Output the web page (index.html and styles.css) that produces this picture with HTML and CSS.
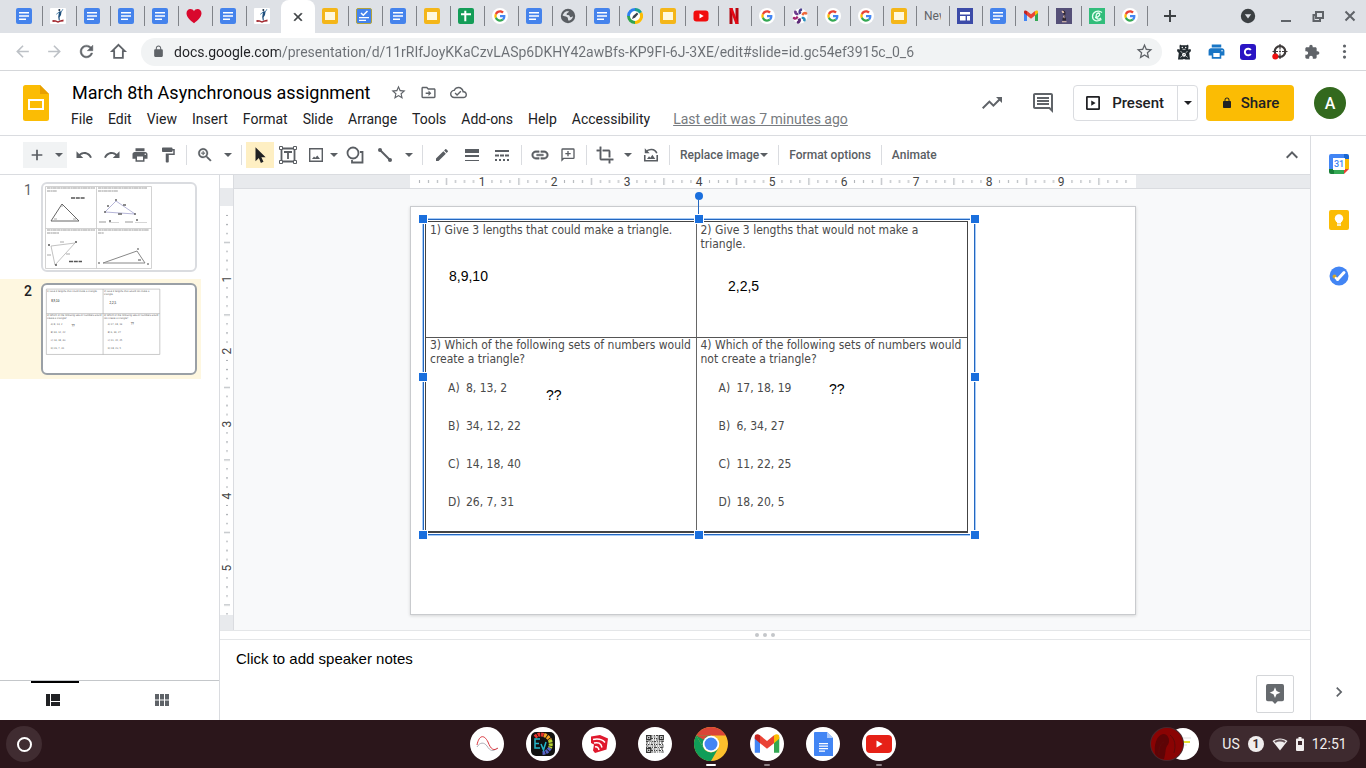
FILE: index.html
```html
<!DOCTYPE html>
<html lang="en">
  <head>
    <meta charset="utf-8">
    <title>March 8th Asynchronous assignment</title>
    <link rel="stylesheet" href="styles.css">
  </head>
  <body>
    <svg class="sprite" aria-hidden="true">
      <!-- favicons -->
      <symbol id="f-doc" viewBox="0 0 16 16"><rect width="16" height="16" rx="2" fill="#4583ec"/><path d="M3 4h10v1.600H3zM3 7.200h10v1.600H3zM3 10.400h7V12H3z" fill="#fff"/></symbol>
      <symbol id="f-slide" viewBox="0 0 16 16"><rect width="16" height="16" rx="2" fill="#f4b619"/><rect x="3" y="4" width="10" height="8" fill="#fff8dd"/></symbol>
      <symbol id="f-check" viewBox="0 0 16 16"><rect x=".5" y=".5" width="15" height="15" rx="1.500" fill="#4583ec" stroke="#b3a33c"/><path d="M5 5l2.300 2.300L11.500 3" fill="none" stroke="#fff" stroke-width="1.500"/><path d="M3 9h10v1.300H3zM3 11.700h7V13H3z" fill="#fff"/></symbol>
      <symbol id="f-sheet" viewBox="0 0 16 16"><rect width="16" height="16" rx="2" fill="#149d58"/><path d="M3 5.200h10v2H3zM6.300 2.800h2v10.400h-2z" fill="#fff"/></symbol>
      <symbol id="f-runner" viewBox="0 0 16 16"><rect width="16" height="16" rx="1" fill="#fff"/><path d="M9 3.600l2.600-.3-.6 3.600-1.400 2.300.2 3.300h-1l-.6-3.600.4-2.300z" fill="#1f4f7c"/><path d="M11.300 3.800l1.600-2.600M9.200 4L6.300 6.300" stroke="#2e6b9a" stroke-width=".8"/><circle cx="9.300" cy="2" r="1" fill="#1f2f44"/><path d="M2.500 12l3 .3 2.500 1 2.500-1 3-.8v2l-3 .3-2.500 1-2.500-1-3 .2z" fill="#a3282f"/></symbol>
      <symbol id="f-heart" viewBox="0 0 16 16"><path d="M8 15.300C4 12 .5 8.800.5 5.200.5 2.700 2.300 1 4.400 1 6 1 7.400 1.900 8 3.200 8.600 1.900 10 1 11.600 1c2.100 0 3.900 1.700 3.900 4.200C15.500 8.800 12 12 8 15.300z" fill="#d9082d"/></symbol>
      <symbol id="f-g" viewBox="-10 -10 68 68"><circle cx="24" cy="24" r="34" fill="#fff"/><path fill="#EA4335" d="M24 9.500c3.540 0 6.710 1.220 9.210 3.600l6.850-6.850C35.900 2.380 30.470 0 24 0 14.620 0 6.510 5.380 2.560 13.220l7.980 6.190C12.430 13.720 17.740 9.500 24 9.500z"/><path fill="#4285F4" d="M46.980 24.550c0-1.570-.15-3.090-.38-4.550H24v9.020h12.940c-.58 2.960-2.260 5.480-4.780 7.180l7.730 6c4.510-4.180 7.090-10.360 7.090-17.650z"/><path fill="#FBBC05" d="M10.530 28.590c-.48-1.450-.76-2.990-.76-4.590s.27-3.140.76-4.590l-7.980-6.190C.92 16.460 0 20.120 0 24c0 3.880.92 7.540 2.560 10.780l7.970-6.190z"/><path fill="#34A853" d="M24 48c6.480 0 11.930-2.130 15.890-5.810l-7.730-6c-2.150 1.450-4.920 2.300-8.160 2.300-6.260 0-11.570-4.220-13.470-9.910l-7.980 6.190C6.510 42.620 14.620 48 24 48z"/></symbol>
      <symbol id="f-globe" viewBox="0 0 16 16"><circle cx="8" cy="8" r="7.200" fill="#5a5e63"/><path d="M4 5c1-1.800 3.500-2 5-1.500-.5 1.300-2 1.200-2.500 2.500-.3 1 1.500 1 2.500 1.200 1 .3.500 1.800 1.800 2 .8.100 1.200-.7 2.200-.7-.6 2.500-2.500 4-4.300 4.200C7.500 11.500 8.500 10 7 9 5.500 8 4 8.500 2.500 7.200z" fill="#dee1e6"/></symbol>
      <symbol id="f-pen" viewBox="0 0 16 16"><circle cx="8" cy="8" r="8" fill="#fff"/><path d="M8 0a8 8 0 0 0-8 8h3a5 5 0 0 1 5-5z" fill="#2d7ff0"/><path d="M0 8a8 8 0 0 0 8 8v-3a5 5 0 0 1-5-5z" fill="#32a350"/><path d="M8 16a8 8 0 0 0 7-12l-2.600 1.600A5 5 0 0 1 8 13z" fill="#fbbc05"/><path d="M8 0a8 8 0 0 1 7 4l-2.600 1.600A5 5 0 0 0 8 3z" fill="#1ba08d"/><path d="M5 11l1-3 4-3.500L11.300 6 8 9.800z" fill="#39424e"/></symbol>
      <symbol id="f-youtube" viewBox="0 0 16 16"><rect x=".5" y="2.500" width="15" height="11" rx="3" fill="#f10d0d"/><path d="M6.500 5.500v5l4.200-2.500z" fill="#fff"/></symbol>
      <symbol id="f-netflix" viewBox="0 0 16 16"><path d="M3.500 0h3v16h-3zM9.500 0h3v16h-3z" fill="#b1060f"/><path d="M3.500 0h3l6 16h-3z" fill="#e50914"/></symbol>
      <symbol id="f-photos" viewBox="0 0 16 16"><circle cx="8" cy="8" r="7.500" fill="#fff"/><path d="M7.500 6.500C5.500 4.500 6.500 1 9 .2c2 .8 1.500 3-.5 3.300 1.500.8 1 2.200-1 3z" fill="#4c3f8f"/><path d="M9.500 6.800c.5-3 4-4 5.800-2 .4 2-1.700 2.700-2.800 1.200 0 1.500-1.200 2-3 .8z" fill="#ee6a3c"/><path d="M9.800 8.800c3-.5 4.700 2 3.700 4.500-1.700 1-3-.6-2.300-2.200-1.400.6-2-.6-1.400-2.300z" fill="#2a8fbd"/><path d="M8.300 10c1.600 2.200.3 5.200-2.300 5.700-2-.6-1.600-2.700.2-3-1.400-.8.200-2.500 2.100-2.700z" fill="#5d2a78"/><path d="M6.500 9.200C5.500 12 2.200 12.500.7 10.400c0-2 2-2.300 3-.9.100-1.400 1.700-1.700 2.800-.3z" fill="#a3246f"/><path d="M6.300 7.300C3.500 7.800 1.300 5.200 2.300 2.700c1.800-1 3.200.7 2.500 2.300 1.300-.6 2.200.8 1.500 2.300z" fill="#6b3b8c"/></symbol>
      <symbol id="f-sites" viewBox="0 0 16 16"><rect width="16" height="16" fill="#3c4ba8"/><path d="M3 4h10v2.600H3zM3 8h5.600v4.500H3zM10 8h3v4.500h-3z" fill="#fff"/></symbol>
      <symbol id="f-gmail" viewBox="0 0 16 16"><path d="M1 4v9h3V6.500z" fill="#4285f4"/><path d="M12 6.500V13h3V4z" fill="#34a853"/><path d="M4 3l4 3.300L12 3v4.500l-4 3.200-4-3.200z" fill="#ea4335"/><path d="M1 5V3.800C1 2.500 2.500 2 4 3v4.500z" fill="#c5221f"/><path d="M15 5V3.800C15 2.500 13.500 2 12 3v4.500z" fill="#fbbc04"/></symbol>
      <symbol id="f-chess" viewBox="0 0 16 16"><rect width="16" height="16" fill="#555078"/><path d="M6.500 3c1.500-1 3 0 3 2L9 9l1 1.500v2H6.500v-2L8 8 7.500 6z" fill="#2d2430"/><path d="M5.500 3c1.200-.8 2.600 0 2.800 2L6.500 5zM7 9l1.300-2.500.3 4zM6 13.300h4.500v1H6z" fill="#e8c7b4"/></symbol>
      <symbol id="f-c" viewBox="0 0 16 16"><rect width="16" height="16" fill="#32bd7b"/><path d="M13 4.500C9 1.500 3.500 4 3.500 8.500c0 4.500 5 5.500 9 3M6 9.500c4.500.3 6-4.300 3.500-4.500-2.300 0-3.500 4.500-1 5.800 1 .5 2.500.2 3.500-.8" fill="none" stroke="#e3fff0" stroke-width="1.300"/></symbol>

      <!-- browser -->
      <symbol id="i-close" viewBox="0 0 24 24"><path d="M19 6.410L17.590 5 12 10.590 6.410 5 5 6.410 10.590 12 5 17.590 6.410 19 12 13.410 17.590 19 19 17.590 13.410 12z" stroke="currentColor"/></symbol>
      <symbol id="i-add" viewBox="0 0 24 24"><path d="M20 13.300h-6.700V20h-2.600v-6.700H4v-2.600h6.700V4h2.600v6.700H20z"/></symbol>
      <symbol id="i-back" viewBox="0 0 24 24"><path d="M20 11H7.830l5.590-5.590L12 4l-8 8 8 8 1.410-1.410L7.830 13H20v-2z"/></symbol>
      <symbol id="i-forward" viewBox="0 0 24 24"><path d="M12 4l-1.410 1.410L16.170 11H4v2h12.170l-5.580 5.590L12 20l8-8z"/></symbol>
      <symbol id="i-reload" viewBox="0 0 24 24"><path d="M17.650 6.350C16.200 4.900 14.210 4 12 4c-4.420 0-7.990 3.580-7.990 8s3.570 8 7.990 8c3.730 0 6.840-2.550 7.730-6h-2.080c-.82 2.330-3.040 4-5.650 4-3.310 0-6-2.690-6-6s2.690-6 6-6c1.660 0 3.140.69 4.220 1.780L13 11h7V4l-2.350 2.350z" stroke="currentColor" stroke-width=".6"/></symbol>
      <symbol id="i-home" viewBox="0 0 24 24"><path d="M12 3.500l8 8h-2.500V20h-11v-8.500H4z" fill="none" stroke="currentColor" stroke-width="2.300"/></symbol>
      <symbol id="i-lock" viewBox="0 0 24 24"><path d="M18 8h-1V6c0-2.760-2.240-5-5-5S7 3.240 7 6v2H6c-1.100 0-2 .9-2 2v10c0 1.100.9 2 2 2h12c1.100 0 2-.9 2-2V10c0-1.100-.9-2-2-2zM8.900 8V6c0-1.710 1.390-3.100 3.100-3.100s3.100 1.390 3.100 3.100v2z"/></symbol>
      <symbol id="i-star" viewBox="0 0 24 24"><path d="M22 9.240l-7.190-.62L12 2 9.190 8.630 2 9.240l5.460 4.730L5.820 21 12 17.270 18.180 21l-1.630-7.030L22 9.240zM12 15.400l-3.760 2.270 1-4.280-3.320-2.880 4.380-.38L12 6.100l1.710 4.040 4.380.38-3.320 2.880 1 4.280L12 15.400z"/></symbol>
      <symbol id="i-more" viewBox="0 0 24 24"><circle cx="12" cy="5" r="2"/><circle cx="12" cy="12" r="2"/><circle cx="12" cy="19" r="2"/></symbol>
      <symbol id="i-puzzle" viewBox="0 0 24 24"><path d="M20.500 11H19V7c0-1.100-.9-2-2-2h-4V3.500C13 2.120 11.880 1 10.500 1S8 2.120 8 3.500V5H4c-1.100 0-1.990.9-1.990 2v3.800H3.500c1.490 0 2.700 1.210 2.700 2.700s-1.210 2.700-2.700 2.700H2V20c0 1.100.9 2 2 2h3.800v-1.500c0-1.490 1.210-2.700 2.700-2.700 1.490 0 2.700 1.210 2.700 2.700V22H17c1.100 0 2-.9 2-2v-4h1.500c1.380 0 2.500-1.120 2.500-2.500S21.880 11 20.500 11z"/></symbol>
      <symbol id="i-bear" viewBox="0 0 16 16"><path d="M4 .5l1.300.7h5.400L12 .5l.5 1.500-.3 3.500L14.500 5l.5 2-1.800 2 .8 6.500H9.500L8 15l-1.500.500H2L2.800 9 1 7l.5-2 2.300.5L3.500 2z" fill="#232b30"/><circle cx="6.300" cy="3.500" r=".7" fill="#fff"/><circle cx="9.700" cy="3.500" r=".7" fill="#fff"/><path d="M6.500 5.300h3M4.500 7.500l1.800 1M11.500 7.500l-1.800 1M4.500 13.500l1.300-1.500M11.500 13.500L10.200 12" stroke="#fff" stroke-width=".7"/><circle cx="8" cy="10.700" r="2" fill="#fff"/><path d="M7.400 11.300l1.300-1.500" stroke="#333" stroke-width=".7"/></symbol>
      <symbol id="i-print" viewBox="0 0 24 24"><path d="M19 8H5c-1.660 0-3 1.340-3 3v6h4v4h12v-4h4v-6c0-1.660-1.340-3-3-3zm-3 11H8v-5h8v5zm3-7c-.55 0-1-.45-1-1s.45-1 1-1 1 .45 1 1-.45 1-1 1zm-1-9H6v4h12V3z"/></symbol>
      <symbol id="i-c" viewBox="0 0 16 16"><rect width="16" height="16" rx="3" fill="#2a15c4"/><path d="M10.800 6A3.300 3.300 0 1 0 10.800 10" fill="none" stroke="#fff" stroke-width="2"/></symbol>
      <symbol id="i-target" viewBox="0 0 16 16"><circle cx="8" cy="7.500" r="5.300" fill="#fff" stroke="#3e3a3a" stroke-width="2.200"/><path d="M8 0v5.500M8 9.500V15M.5 7.500H6M10 7.500h5.500" stroke="#3e3a3a" stroke-width="1.200"/><circle cx="8" cy="7.500" r="1" fill="#3e3a3a"/><circle cx="3.300" cy="12.500" r="3" fill="#ee1111"/></symbol>

      <!-- document header -->
      <symbol id="i-slides" viewBox="0 0 26 36"><path d="M2.500 0H17l9 9v24.500a2.500 2.500 0 0 1-2.500 2.500h-21A2.500 2.500 0 0 1 0 33.500v-31A2.500 2.500 0 0 1 2.500 0z" fill="#fbbc04"/><path d="M17 0l9 9h-9z" fill="#e8a002"/><rect x="6" y="15" width="14" height="9" fill="none" stroke="#fff" stroke-width="2"/></symbol>
      <symbol id="i-move" viewBox="0 0 24 24"><path d="M20 6h-8l-2-2H4c-1.100 0-2 .9-2 2v12c0 1.100.9 2 2 2h16c1.100 0 2-.9 2-2V8c0-1.100-.9-2-2-2zm0 12H4V6h5.200l2 2H20v10zm-8-1l4-4-4-4v3H8v2h4z"/></symbol>
      <symbol id="i-cloud" viewBox="0 0 24 24"><path d="M19.350 10.040C18.670 6.590 15.640 4 12 4 9.110 4 6.600 5.640 5.350 8.040 2.340 8.360 0 10.910 0 14c0 3.310 2.690 6 6 6h13c2.760 0 5-2.240 5-5 0-2.640-2.050-4.780-4.650-4.960zM19 18H6c-2.210 0-4-1.790-4-4 0-2.050 1.530-3.760 3.560-3.970l1.070-.11.500-.95C8.080 7.140 9.940 6 12 6c2.620 0 4.880 1.860 5.390 4.430l.3 1.500 1.530.11c1.560.1 2.780 1.410 2.780 2.960 0 1.650-1.350 3-3 3zm-9-3.820l-2.090-2.090L6.500 13.500 10 17l6.010-6.010-1.410-1.410z"/></symbol>
      <symbol id="i-trend" viewBox="0 0 24 24"><path d="M16 6l2.290 2.290-4.880 4.880-4-4L2 16.590 3.410 18l6-6 4 4 6.300-6.290L22 12V6z"/></symbol>
      <symbol id="i-comment" viewBox="0 0 24 24"><path d="M21.990 4c0-1.100-.89-2-1.990-2H4c-1.100 0-2 .9-2 2v12c0 1.100.9 2 2 2h14l4 4-.01-18zM20 4v13.170L18.830 16H4V4h16zM6 12h12v2H6zm0-3h12v2H6zm0-3h12v2H6z"/></symbol>
      <symbol id="i-present" viewBox="0 0 16 16"><rect x="1" y="1" width="14" height="14" rx=".5" fill="none" stroke="currentColor" stroke-width="2"/><path d="M6 5v6l5-3z"/></symbol>
      <symbol id="i-caret" viewBox="0 0 8 4"><path d="M0 0h8L4 4z"/></symbol>

      <!-- editing toolbar -->
      <symbol id="i-undo" viewBox="0 0 24 24"><path d="M12.500 8c-2.650 0-5.050.99-6.900 2.600L2 7v9h9l-3.620-3.620c1.390-1.160 3.160-1.880 5.120-1.880 3.540 0 6.550 2.310 7.600 5.500l2.370-.78C21.080 11.030 17.150 8 12.500 8z"/></symbol>
      <symbol id="i-redo" viewBox="0 0 24 24"><path d="M18.400 10.600C16.550 8.990 14.150 8 11.500 8c-4.650 0-8.580 3.030-9.960 7.220L3.900 16c1.050-3.190 4.050-5.500 7.600-5.500 1.950 0 3.730.72 5.120 1.880L13 16h9V7l-3.600 3.600z"/></symbol>
      <symbol id="i-paint" viewBox="0 0 24 24"><path d="M18 4V3c0-.55-.45-1-1-1H5c-.55 0-1 .45-1 1v4c0 .55.45 1 1 1h12c.55 0 1-.45 1-1V6h1v4H9v11c0 .55.45 1 1 1h2c.55 0 1-.45 1-1v-9h8V4h-3z"/></symbol>
      <symbol id="i-zoom" viewBox="0 0 24 24"><path d="M15.500 14h-.79l-.28-.27C15.410 12.590 16 11.110 16 9.500 16 5.910 13.090 3 9.500 3S3 5.910 3 9.500 5.910 16 9.500 16c1.610 0 3.090-.59 4.230-1.570l.27.28v.79l5 4.990L20.490 19l-4.990-5zm-6 0C7.010 14 5 11.990 5 9.500S7.010 5 9.500 5 14 7.010 14 9.500 11.990 14 9.500 14zM12 10h-2v2H9v-2H7V9h2V7h1v2h2z" stroke="currentColor" stroke-width=".4"/></symbol>
      <symbol id="i-cursor" viewBox="0 0 16 16"><path d="M4 1v12.500l3-2.800 1.800 4.300 2.300-1-1.900-4H13z" fill="#202124"/></symbol>
      <symbol id="i-textbox" viewBox="0 0 18 18"><path d="M2.500 2.500h13v13h-13zM5 6h8M9 6v7" fill="none" stroke="currentColor" stroke-width="1.800"/><g fill="#fff" stroke="currentColor"><path d="M.5.5h3v3h-3zM14.500.5h3v3h-3zM.5 14.500h3v3h-3zM14.500 14.500h3v3h-3z"/></g></symbol>
      <symbol id="i-image" viewBox="0 0 14 14"><path d="M.700.700h12.600v12.600H.700z" fill="none" stroke="currentColor" stroke-width="1.400"/><path d="M3 11l2-2.500 1.300 1.300L8.300 7.500 11 11z"/></symbol>
      <symbol id="i-shape" viewBox="0 0 18 18"><circle cx="7" cy="7" r="5.500" fill="none" stroke="currentColor" stroke-width="1.800"/><path d="M14 6h2.500v10.500H6V14" fill="none" stroke="currentColor" stroke-width="1.800"/></symbol>
      <symbol id="i-line" viewBox="0 0 16 16"><path d="M3 3l10 10" stroke="currentColor" stroke-width="2"/><circle cx="3" cy="3" r="2"/><circle cx="13" cy="13" r="2"/></symbol>
      <symbol id="i-edit" viewBox="0 0 24 24"><path d="M3 17.250V21h3.750L17.810 9.940l-3.750-3.750L3 17.250zM20.710 7.040c.39-.39.39-1.020 0-1.410l-2.340-2.340c-.39-.39-1.020-.39-1.410 0l-1.830 1.830 3.750 3.750 1.830-1.830z"/></symbol>
      <symbol id="i-weight" viewBox="0 0 14 14"><path d="M0 1h14v4H0zM0 7h14v2H0zM0 12h14v1H0z"/></symbol>
      <symbol id="i-dash" viewBox="0 0 14 14"><path d="M0 2h14v2H0zM0 6.500h4v2H0zM5 6.500h4v2H5zM10 6.500h4v2h-4zM0 11h2v2H0zM4 11h2v2H4zM8 11h2v2H8zM12 11h2v2h-2z"/></symbol>
      <symbol id="i-link" viewBox="0 0 24 24"><path d="M3.900 12c0-1.710 1.390-3.100 3.100-3.100h4V7H7c-2.760 0-5 2.240-5 5s2.240 5 5 5h4v-1.900H7c-1.710 0-3.100-1.390-3.100-3.100zM8 13h8v-2H8v2zm9-6h-4v1.900h4c1.710 0 3.100 1.390 3.100 3.100s-1.390 3.100-3.100 3.100h-4V17h4c2.760 0 5-2.240 5-5s-2.240-5-5-5z" stroke="currentColor" stroke-width=".5"/></symbol>
      <symbol id="i-addcomment" viewBox="0 0 24 24"><path d="M20 2H4a2 2 0 0 0-2 2v18l4-4h14a2 2 0 0 0 2-2V4a2 2 0 0 0-2-2zm0 14H5l-1 1V4h16zM11 14h2v-3h3V9h-3V6h-2v3H8v2h3z"/></symbol>
      <symbol id="i-crop" viewBox="0 0 24 24"><path d="M17 15h2V7c0-1.100-.9-2-2-2H9v2h8v8zM7 17V1H5v4H1v2h4v10c0 1.100.9 2 2 2h10v4h2v-4h4v-2H7z" stroke="currentColor" stroke-width=".5"/></symbol>
      <symbol id="i-reset" viewBox="0 0 18 18"><path d="M2 9v6.500h14V9M3.500 5.500C6 1.800 13.500 1.500 15.500 7" fill="none" stroke="currentColor" stroke-width="1.800"/><path d="M2 1.500V7h5.500zM4.500 13.500l2.300-3L8.300 12l2.200-3.300 3.300 4.800z"/></symbol>
      <symbol id="i-up" viewBox="0 0 24 24"><path d="M12 8l-6 6 1.410 1.410L12 10.830l4.590 4.580L18 14z"/></symbol>
      <symbol id="i-right" viewBox="0 0 24 24"><path d="M10 6L8.590 7.410 13.170 12l-4.580 4.590L10 18l6-6z"/></symbol>
      <symbol id="i-film" viewBox="0 0 14 12"><path d="M0 0h4v12H0zM5 0h9v7H5zM5 8h9v4H5z"/></symbol>
      <symbol id="i-grid" viewBox="0 0 14 12"><path d="M0 0h4v5.500H0zM5 0h4v5.500H5zM10 0h4v5.500h-4zM0 6.500h4V12H0zM5 6.500h4V12H5zM10 6.500h4V12h-4z"/></symbol>
      <symbol id="i-explore" viewBox="0 0 20 22"><path d="M2 0h16a2 2 0 0 1 2 2v15a2 2 0 0 1-2 2h-5l-3 3-3-3H2a2 2 0 0 1-2-2V2a2 2 0 0 1 2-2z"/><path d="M10 3.500l1.700 4.300L16 9.500l-4.300 1.700L10 15.500l-1.700-4.300L4 9.500l4.300-1.700z" fill="#fff"/></symbol>
    </svg>

    <nav class="tabs" aria-label="Tabs">
      <a class="tab" href="#"><svg><use href="#f-doc"/></svg></a>
      <a class="tab" href="#"><svg><use href="#f-runner"/></svg></a>
      <a class="tab" href="#"><svg><use href="#f-doc"/></svg></a>
      <a class="tab" href="#"><svg><use href="#f-doc"/></svg></a>
      <a class="tab" href="#"><svg><use href="#f-doc"/></svg></a>
      <a class="tab" href="#"><svg><use href="#f-heart"/></svg></a>
      <a class="tab" href="#"><svg><use href="#f-doc"/></svg></a>
      <a class="tab last" href="#"><svg><use href="#f-runner"/></svg></a>
      <div class="tab active"><button aria-label="Close tab"><svg><use href="#i-close"/></svg></button></div>
      <a class="tab" href="#"><svg><use href="#f-slide"/></svg></a>
      <a class="tab" href="#"><svg><use href="#f-check"/></svg></a>
      <a class="tab" href="#"><svg><use href="#f-doc"/></svg></a>
      <a class="tab" href="#"><svg><use href="#f-slide"/></svg></a>
      <a class="tab" href="#"><svg><use href="#f-sheet"/></svg></a>
      <a class="tab" href="#"><svg><use href="#f-g"/></svg></a>
      <a class="tab" href="#"><svg><use href="#f-doc"/></svg></a>
      <a class="tab" href="#"><svg><use href="#f-globe"/></svg></a>
      <a class="tab small" href="#"><svg><use href="#f-doc"/></svg></a>
      <a class="tab small" href="#"><svg><use href="#f-pen"/></svg></a>
      <a class="tab small" href="#"><svg><use href="#f-slide"/></svg></a>
      <a class="tab small" href="#"><svg><use href="#f-youtube"/></svg></a>
      <a class="tab small" href="#"><svg><use href="#f-netflix"/></svg></a>
      <a class="tab small" href="#"><svg><use href="#f-g"/></svg></a>
      <a class="tab small" href="#"><svg><use href="#f-photos"/></svg></a>
      <a class="tab small" href="#"><svg><use href="#f-g"/></svg></a>
      <a class="tab small" href="#"><svg><use href="#f-g"/></svg></a>
      <a class="tab small" href="#"><svg><use href="#f-slide"/></svg></a>
      <a class="tab small" href="#"><span>New</span></a>
      <a class="tab small" href="#"><svg><use href="#f-sites"/></svg></a>
      <a class="tab small" href="#"><svg><use href="#f-doc"/></svg></a>
      <a class="tab small" href="#"><svg><use href="#f-gmail"/></svg></a>
      <a class="tab small" href="#"><svg><use href="#f-chess"/></svg></a>
      <a class="tab small" href="#"><svg><use href="#f-c"/></svg></a>
      <a class="tab small" href="#"><svg><use href="#f-g"/></svg></a>
      <button class="newtab" aria-label="New tab"><svg><use href="#i-add"/></svg></button>
      <div class="window">
        <button class="search" aria-label="Search tabs"><svg viewBox="0 0 16 16"><circle cx="8" cy="8" r="7.200"/><path d="M4.800 6.200h6.400L8 10.500z" fill="#dee1e6"/></svg></button>
        <button aria-label="Minimize"><svg viewBox="0 0 16 16"><path d="M3 12h10v2H3z"/></svg></button>
        <button aria-label="Restore"><svg viewBox="0 0 16 16"><path d="M6 4h7v6H6zM5.500 7H3.500v6H10V10.500" fill="none" stroke="currentColor" stroke-width="2"/></svg></button>
        <button aria-label="Close"><svg viewBox="0 0 16 16"><path d="M3.500 3.500l9 9M12.500 3.500l-9 9" stroke="currentColor" stroke-width="2"/></svg></button>
      </div>
    </nav>

    <div class="browser">
      <button class="off" aria-label="Back"><svg><use href="#i-back"/></svg></button>
      <button class="off" aria-label="Forward"><svg><use href="#i-forward"/></svg></button>
      <button aria-label="Reload"><svg><use href="#i-reload"/></svg></button>
      <button aria-label="Home"><svg><use href="#i-home"/></svg></button>
      <div class="omnibox">
        <svg class="lock"><use href="#i-lock"/></svg>
        <input type="text" aria-label="Address" value="docs.google.com/presentation/d/11rRIfJoyKKaCzvLASp6DKHY42awBfs-KP9FI-6J-3XE/edit#slide=id.gc54ef3915c_0_6">
        <button aria-label="Bookmark"><svg><use href="#i-star"/></svg></button>
      </div>
      <button aria-label="Bear extension"><svg class="ext"><use href="#i-bear"/></svg></button>
      <button class="blue" aria-label="Print extension"><svg><use href="#i-print"/></svg></button>
      <button aria-label="C extension"><svg class="ext"><use href="#i-c"/></svg></button>
      <button aria-label="Target extension"><svg class="ext"><use href="#i-target"/></svg></button>
      <button aria-label="Extensions"><svg class="ext"><use href="#i-puzzle"/></svg></button>
      <button aria-label="More"><svg><use href="#i-more"/></svg></button>
    </div>

    <header class="dochead">
      <a class="logo" href="#" aria-label="Slides home"><svg><use href="#i-slides"/></svg></a>
      <div class="titles">
        <div class="titlerow">
          <h1>March 8th Asynchronous assignment</h1>
          <button aria-label="Star"><svg><use href="#i-star"/></svg></button>
          <button aria-label="Move"><svg><use href="#i-move"/></svg></button>
          <button aria-label="Saved to Drive"><svg><use href="#i-cloud"/></svg></button>
        </div>
        <div class="menus">
          <button>File</button>
          <button>Edit</button>
          <button>View</button>
          <button>Insert</button>
          <button>Format</button>
          <button>Slide</button>
          <button>Arrange</button>
          <button>Tools</button>
          <button>Add-ons</button>
          <button>Help</button>
          <button>Accessibility</button>
          <a href="#">Last edit was 7 minutes ago</a>
        </div>
      </div>
      <div class="actions">
        <button class="round" aria-label="Activity"><svg><use href="#i-trend"/></svg></button>
        <button class="round" aria-label="Comments"><svg><use href="#i-comment"/></svg></button>
        <div class="present">
          <button><svg><use href="#i-present"/></svg>Present</button>
          <button class="drop" aria-label="Present options"><svg><use href="#i-caret"/></svg></button>
        </div>
        <button class="share"><svg><use href="#i-lock"/></svg>Share</button>
        <button class="avatar">A</button>
      </div>
    </header>

    <main class="app">
      <div class="editor">
        <div class="toolbar">
          <div class="new">
            <button class="tool" aria-label="New slide"><svg class="s16"><use href="#i-add"/></svg></button>
            <button class="caret" aria-label="New slide options"><svg><use href="#i-caret"/></svg></button>
          </div>
          <button class="tool" aria-label="Undo"><svg><use href="#i-undo"/></svg></button>
          <button class="tool" aria-label="Redo"><svg><use href="#i-redo"/></svg></button>
          <button class="tool" aria-label="Print"><svg><use href="#i-print"/></svg></button>
          <button class="tool" aria-label="Paint format"><svg><use href="#i-paint"/></svg></button>
          <i class="sep"></i>
          <button class="tool" aria-label="Zoom"><svg><use href="#i-zoom"/></svg></button>
          <button class="caret" aria-label="Zoom options"><svg><use href="#i-caret"/></svg></button>
          <i class="sep"></i>
          <button class="tool on" aria-label="Select"><svg><use href="#i-cursor"/></svg></button>
          <button class="tool" aria-label="Text box"><svg><use href="#i-textbox"/></svg></button>
          <button class="tool" aria-label="Insert image"><svg class="s14"><use href="#i-image"/></svg></button>
          <button class="caret tight" aria-label="Image options"><svg><use href="#i-caret"/></svg></button>
          <button class="tool wide" aria-label="Shape"><svg><use href="#i-shape"/></svg></button>
          <button class="tool wide" aria-label="Line"><svg class="s16"><use href="#i-line"/></svg></button>
          <button class="caret" aria-label="Line options"><svg><use href="#i-caret"/></svg></button>
          <i class="sep"></i>
          <button class="tool wide" aria-label="Border color"><svg class="s16"><use href="#i-edit"/></svg></button>
          <button class="tool wide" aria-label="Border weight"><svg class="s14"><use href="#i-weight"/></svg></button>
          <button class="tool wide" aria-label="Border dash"><svg class="s14"><use href="#i-dash"/></svg></button>
          <i class="sep"></i>
          <button class="tool" aria-label="Insert link"><svg class="s20"><use href="#i-link"/></svg></button>
          <button class="tool" aria-label="Add comment"><svg class="s16"><use href="#i-addcomment"/></svg></button>
          <i class="sep"></i>
          <button class="tool" aria-label="Crop image"><svg><use href="#i-crop"/></svg></button>
          <button class="caret" aria-label="Mask image"><svg><use href="#i-caret"/></svg></button>
          <button class="tool" aria-label="Reset image"><svg class="s16"><use href="#i-reset"/></svg></button>
          <i class="sep"></i>
          <button class="text">Replace image<svg><use href="#i-caret"/></svg></button>
          <i class="sep"></i>
          <button class="text">Format options</button>
          <i class="sep"></i>
          <button class="text">Animate</button>
          <button class="tool hide" aria-label="Hide the menus"><svg><use href="#i-up"/></svg></button>
        </div>

        <div class="work">
          <aside class="filmstrip">
            <ol>
              <li>
                <span>1</span>
                <svg class="thumb" viewBox="0 0 152 86">
                  <path d="M2.500 2.500h106v82h-106zM53.500 2.500v82M2.500 44.500h106" fill="none" stroke="#c8c8c8" stroke-width=".8"/>
                  <g stroke="#bdbdbd" stroke-width="1.600" stroke-dasharray="3 .4 2 .3 4 .4">
                    <path d="M4 4h48M4 7h10M55 4h49M55 7h20M4 46h48M4 49h12M55 46h51M55 49h6"/>
                  </g>
                  <path d="M28 14h14M26 77.500h13" stroke="#555" stroke-width="1.600" stroke-dasharray="4 .8"/>
                  <path d="M8 37h28L19 20z" fill="none" stroke="#666"/>
                  <path d="M11 35h3M30 35h3M18 22h2" stroke="#aaa"/>
                  <path d="M62 28l11-11 19 13z" fill="none" stroke="#a3a3cf" stroke-width=".8"/>
                  <path d="M61 28h2M72 16h2M91 30h2M64 22h2M80 21h3M75 30h4M66 37h2M93 36h2" stroke="#666" stroke-width="1.600"/>
                  <path d="M56 38h7M82 38h8" stroke="#999" stroke-width="1.200"/>
                  <path d="M66 38.500h10M92 38.500h12" stroke="#bbb" stroke-width=".6"/>
                  <path d="M8 62l24-3-20 22z" fill="none" stroke="#999" stroke-width=".6"/>
                  <path d="M5 61h2M32 58h2M12 81h2" stroke="#555" stroke-width="1.600"/>
                  <path d="M17 58h4M4 71h4M23 70h4" stroke="#aaa" stroke-width="1.200"/>
                  <path d="M60 79h42l-8-12z" fill="none" stroke="#888"/>
                  <path d="M94 65h2M55 79h2M104 80h2M95 76h3" stroke="#888" stroke-width="1.400"/>
                </svg>
              </li>
              <li class="current">
                <span>2</span>
                <svg class="thumb" viewBox="0 0 726 409">
                  <path d="M16 14h542v312H16zM287 14v312M16 131h542" fill="none" stroke="#aaa" stroke-width="3"/>
                  <g class="qtext">
                    <text x="19" y="28">1) Give 3 lengths that could make a triangle.</text>
                    <text x="291" y="28">2) Give 3 lengths that would not make a</text>
                    <text x="291" y="42">triangle.</text>
                    <text x="19" y="144">3) Which of the following sets of numbers would</text>
                    <text x="19" y="158">create a triangle?</text>
                    <text x="291" y="144">4) Which of the following sets of numbers would</text>
                    <text x="291" y="158">not create a triangle?</text>
                    <text x="37" y="186">A) 8, 13, 2</text>
                    <text x="37" y="224">B) 34, 12, 22</text>
                    <text x="37" y="262">C) 14, 18, 40</text>
                    <text x="37" y="300">D) 26, 7, 31</text>
                    <text x="309" y="186">A) 17, 18, 19</text>
                    <text x="309" y="224">B) 6, 34, 27</text>
                    <text x="309" y="262">C) 11, 22, 25</text>
                    <text x="309" y="300">D) 18, 20, 5</text>
                  </g>
                  <g class="atext">
                    <text x="39" y="74">8,9,10</text>
                    <text x="318" y="85">2,2,5</text>
                    <text x="136" y="193">??</text>
                    <text x="419" y="187">??</text>
                  </g>
                </svg>
              </li>
            </ol>
            <div class="views">
              <button class="sel" aria-label="Filmstrip view"><svg><use href="#i-film"/></svg></button>
              <button aria-label="Grid view"><svg><use href="#i-grid"/></svg></button>
            </div>
          </aside>

          <section class="stage">
            <div class="canvasrow">
              <div class="vruler">
                <svg viewBox="0 0 13 409">
                  <defs>
                    <pattern id="vt" width="13" height="72.500" patternUnits="userSpaceOnUse">
                      <path d="M6 9.500h2M6 18.500h2M6 27.500h2M4 36.500h6M6 45.500h2M6 54.500h2M6 63.500h2" stroke="#a9adb2"/>
                    </pattern>
                  </defs>
                  <rect width="13" height="409" fill="#fff"/>
                  <rect width="13" height="409" fill="url(#vt)"/>
                  <g>
                    <text transform="translate(11 73) rotate(-90)">1</text>
                    <text transform="translate(11 145) rotate(-90)">2</text>
                    <text transform="translate(11 218) rotate(-90)">3</text>
                    <text transform="translate(11 290) rotate(-90)">4</text>
                    <text transform="translate(11 362) rotate(-90)">5</text>
                  </g>
                </svg>
              </div>
              <div class="canvas">
                <div class="hruler">
                  <svg viewBox="0 0 726 13">
                    <defs>
                      <pattern id="ht" width="72.500" height="13" patternUnits="userSpaceOnUse">
                        <path d="M9.500 5v3M18.500 5v3M27.500 5v3M36.500 3v7M45.500 5v3M54.500 5v3M63.500 5v3" stroke="#a9adb2"/>
                      </pattern>
                    </defs>
                    <rect width="726" height="13" fill="#fff"/>
                    <rect width="725" height="13" fill="url(#ht)"/>
                    <g>
                      <text x="72" y="11">1</text>
                      <text x="144" y="11">2</text>
                      <text x="217" y="11">3</text>
                      <text x="289" y="11">4</text>
                      <text x="362" y="11">5</text>
                      <text x="434" y="11">6</text>
                      <text x="506" y="11">7</text>
                      <text x="579" y="11">8</text>
                      <text x="651" y="11">9</text>
                    </g>
                  </svg>
                </div>
                <div class="slide">
                  <div class="worksheet">
                    <div class="cell">
                      <p>1) Give 3 lengths that could make a triangle.</p>
                    </div>
                    <div class="cell">
                      <p>2) Give 3 lengths that would not make a triangle.</p>
                    </div>
                    <div class="cell">
                      <p>3) Which of the following sets of numbers would create a triangle?</p>
                      <ol>
                        <li>8, 13, 2</li>
                        <li>34, 12, 22</li>
                        <li>14, 18, 40</li>
                        <li>26, 7, 31</li>
                      </ol>
                    </div>
                    <div class="cell">
                      <p>4) Which of the following sets of numbers would not create a triangle?</p>
                      <ol>
                        <li>17, 18, 19</li>
                        <li>6, 34, 27</li>
                        <li>11, 22, 25</li>
                        <li>18, 20, 5</li>
                      </ol>
                    </div>
                  </div>
                  <span class="answer a1">8,9,10</span>
                  <span class="answer a2">2,2,5</span>
                  <span class="answer a3">??</span>
                  <span class="answer a4">??</span>
                  <div class="selection">
                    <i class="rotate"></i>
                    <b class="n w"></b><b class="n"></b><b class="n e"></b>
                    <b class="w"></b><b class="e"></b>
                    <b class="s w"></b><b class="s"></b><b class="s e"></b>
                  </div>
                </div>
              </div>
            </div>
            <div class="splitter"><i></i><i></i><i></i></div>
            <div class="notes">
              <textarea aria-label="Speaker notes" placeholder="Click to add speaker notes"></textarea>
              <button class="explore" aria-label="Explore"><svg><use href="#i-explore"/></svg></button>
            </div>
          </section>
        </div>
      </div>

      <aside class="side">
        <button aria-label="Calendar">
          <svg viewBox="0 0 20 20"><path d="M2 0h13v5H5v10H0V2a2 2 0 0 1 2-2z" fill="#4285f4"/><path d="M15 0h3a2 2 0 0 1 2 2v3h-5z" fill="#1967d2"/><path d="M15 5h5v10h-5z" fill="#fbbc04"/><path d="M5 15h10v5H5z" fill="#34a853"/><path d="M0 15h5v5H2a2 2 0 0 1-2-2z" fill="#188038"/><path d="M15 15h5l-5 5z" fill="#ea4335"/><path d="M4 4h12v12H4z" fill="#fff"/><text x="10" y="13">31</text></svg>
        </button>
        <button aria-label="Keep">
          <svg viewBox="0 0 20 20"><rect width="20" height="20" rx="2" fill="#fbbc04"/><circle cx="10" cy="8.500" r="4.200" fill="#fff"/><path d="M8 11h4v2.500H8zM8 14.300h4v1.500H8z" fill="#fff"/></svg>
        </button>
        <button aria-label="Tasks">
          <svg viewBox="0 0 20 20"><circle cx="10" cy="10" r="9.500" fill="#4285f4"/><path d="M8.500 13.500l6.500-7" stroke="#fff" stroke-width="3" stroke-linecap="round"/><circle cx="5.500" cy="10.500" r="2" fill="#d4a72c"/><path d="M6.800 12l1.700 1.700" stroke="#fff" stroke-width="2.400" stroke-linecap="round"/></svg>
        </button>
        <button class="expand" aria-label="Show side panel"><svg><use href="#i-right"/></svg></button>
      </aside>
    </main>

    <footer class="shelf">
      <button class="launcher" aria-label="Launcher"><i></i></button>
      <div class="apps">
        <button aria-label="Desmos"><svg viewBox="0 0 34 34"><circle cx="17" cy="17" r="17" fill="#fff"/><path d="M7 20c3-5 7-5 10-1 3 5 6 6 10 2" fill="none" stroke="#9a9aa4" stroke-width=".8"/><path d="M7 18C9 8 14 7 18 15c3 8 6 9 10 6" fill="none" stroke="#d9363e"/></svg></button>
        <button aria-label="EV"><svg viewBox="0 0 34 34"><circle cx="17" cy="17" r="17" fill="#fff"/><rect x="5" y="5" width="24" height="24" rx="5" fill="#111"/><g fill="none" stroke-width="4" stroke-dasharray="2.600 .8"><path d="M9 10c3-3 6-3 9-2" stroke="#e5342e"/><path d="M18 8c3 1 5 3 6 5" stroke="#f5a623"/><path d="M24 13c1 3 1 5 0 8" stroke="#b9d432"/><path d="M24 21c-2 3-4 5-8 5" stroke="#5763c6"/></g><path d="M14 12H9v9h5M9 16.500h4M15 17l2.500 6 2.500-8" fill="none" stroke="#24b5c9" stroke-width="1.500"/></svg></button>
        <button aria-label="SketchUp"><svg viewBox="0 0 34 34"><circle cx="17" cy="17" r="17" fill="#fff"/><path d="M9 9.500L18 8l8 3.500-1.500 11L13 26l-2-2.500 1-6-3-1.500z" fill="#e0182d"/><path d="M11 12.500c5-1 9-.5 12 3M12 16c4-1 7 0 8 4.500M13 20c2-.5 3.500.5 4 3" fill="none" stroke="#fff" stroke-width="1.500"/></svg></button>
        <button aria-label="QR code"><svg viewBox="0 0 34 34"><circle cx="17" cy="17" r="17" fill="#fff"/><g stroke="#444" stroke-width="1.200"><path d="M8 8.500h18M8 13h18" stroke-dasharray="1.200 1 2.400 .8 1 1.300"/><path d="M8 10h18M8 16h18M8 22h18" stroke-dasharray="2 1.200 1 .8 1.500 1"/><path d="M8 11.500h18M8 17.500h18M8 23.500h18" stroke-dasharray="1 .8 1.700 1.200 2.300 1"/><path d="M8 14.500h18M8 19h18M8 25h18" stroke-dasharray="2.600 1 1 1 1.300 .7"/><path d="M8 20.500h18" stroke-dasharray="1 1.100 3 .8"/></g><path d="M8.700 8.700h4v4h-4zM21.300 8.700h4v4h-4zM8.700 21.300h4v4h-4z" fill="#fff" stroke="#333" stroke-width="1.200"/><path d="M10 10h1.500v1.500H10zM22.600 10h1.500v1.500h-1.500zM10 22.600h1.500v1.500H10z" fill="#333"/></svg></button>
        <button class="open" aria-label="Chrome"><svg viewBox="0 0 34 34"><circle cx="17" cy="17" r="17" fill="#fbc02d"/><path d="M2.280 8.500A17 17 0 0 1 31.720 8.500H17z" fill="#db4437"/><path d="M2.280 8.500A17 17 0 0 0 17 34l7.360-12.750A8.500 8.500 0 0 1 9.640 21.250z" fill="#0f9d58"/><path d="M2.280 8.500L9.640 21.250 17 8.500z" fill="#0f9d58"/><path d="M2.280 8.500h29.440H17A8.500 8.500 0 0 0 9.640 12.750z" fill="#db4437"/><circle cx="17" cy="17" r="8.300" fill="#fff"/><circle cx="17" cy="17" r="6.500" fill="#4285f4"/></svg></button>
        <button class="run" aria-label="Gmail"><svg viewBox="0 0 34 34"><circle cx="17" cy="17" r="17" fill="#fff"/><use href="#f-gmail" x="3" y="3" width="28" height="28"/></svg></button>
        <button aria-label="Docs"><svg viewBox="0 0 34 34"><circle cx="17" cy="17" r="17" fill="#fff"/><path d="M9 5h12l6 6v18H9a1 1 0 0 1-1-1V6a1 1 0 0 1 1-1z" fill="#4285f4"/><path d="M21 5l6 6h-6z" fill="#a8c7fa"/><path d="M13 16h9v1.300h-9zM13 18.500h9v1.300h-9zM13 21h9v1.300h-9zM13 23.500h6v1.300h-6z" fill="#fff"/></svg></button>
        <button class="run" aria-label="YouTube"><svg viewBox="0 0 34 34"><circle cx="17" cy="17" r="17" fill="#fff"/><rect x="4" y="8" width="26" height="18" rx="4" fill="#e62117"/><path d="M14.500 13.500v7l6-3.500z" fill="#fff"/></svg></button>
      </div>
      <div class="status">
        <button class="holding" aria-label="Recent files"><svg viewBox="0 0 50 36"><circle cx="33" cy="18" r="16" fill="#fff"/><path d="M33 16h7" stroke="#e6e032" stroke-width="2"/><path d="M33 12h8M33 19h4" stroke="#ddd"/><circle cx="17" cy="18" r="17" fill="#49282d"/><circle cx="17" cy="18" r="16" fill="#8a0303"/><path d="M5 28c-1-9 1-18 8-20 6 0 8 8 4 12-2 3-1 7-3 13-4 0-7-2-9-5z" fill="#5e0406"/><path d="M9 29c-1-7 2-12 5-13M20 9c5 4 6 10 4 18" fill="none" stroke="#5e0a0a"/></svg></button>
        <button class="tray">
          <span>US</span>
          <svg viewBox="0 0 16 16"><circle cx="8" cy="8" r="8"/><text x="8" y="12">1</text></svg>
          <svg viewBox="0 0 16 16"><path d="M8 14.500L.5 5C4.500 1.500 11.500 1.500 15.500 5z"/><path d="M2.300 5.300C5.500 3 10.500 3 13.700 5.300l-1.200 1.500c-2.800-1.600-6.200-1.600-9 0z" fill="#66555a"/></svg>
          <svg class="batt" viewBox="0 0 8 14"><path d="M2.500 0h3v1.500H7a1 1 0 0 1 1 1V13a1 1 0 0 1-1 1H1a1 1 0 0 1-1-1V2.500a1 1 0 0 1 1-1h1.500z"/><path d="M2 4h4v4H2z" fill="#3e2a2f"/></svg>
          <span>12:51</span>
        </button>
      </div>
    </footer>
  </body>
</html>
```
FILE: styles.css
```css
* {
  box-sizing: border-box;
}
body {
  margin: 0;
  height: 100vh;
  display: flex;
  flex-direction: column;
  overflow: hidden;
  font-family: Roboto, Arial, sans-serif;
  color: #202124;
  background-color: white;
}
button {
  border: none;
  padding: 0;
  margin: 0;
  background: none;
  font: inherit;
  color: inherit;
  display: flex;
  align-items: center;
  justify-content: center;
}
svg {
  display: block;
  flex: none;
  fill: currentColor;
}
.sprite {
  position: absolute;
  width: 0;
  height: 0;
}

/* tab strip */
.tabs {
  height: 33px;
  flex: none;
  display: flex;
  padding-left: 9px;
  background-color: #dee1e6;
}
.tab {
  width: 34px;
  height: 32px;
  padding-left: 7px;
  display: flex;
  align-items: center;
  text-decoration: none;
  font-size: 12px;
  color: #5f6368;
}
.tab.small {
  width: 33px;
}
.tab svg {
  width: 16px;
  height: 16px;
}
.tab span {
  width: 17px;
  overflow: hidden;
  white-space: nowrap;
}
.tab::after {
  content: "";
  width: 1px;
  height: 20px;
  margin-left: auto;
  background-color: #808389;
}
.tab.last::after, .tab.active::after {
  display: none;
}
.tab.active {
  height: 33px;
  padding: 0;
  justify-content: center;
  background-color: white;
  border-radius: 8px 8px 0 0;
  color: #3c4043;
  box-shadow: -4px 8px 0 -4px white, 4px 8px 0 -4px white;
}
.tab.active svg {
  width: 14px;
  height: 14px;
}
.newtab {
  width: 44px;
  height: 32px;
  color: #3c4043;
}
.newtab svg {
  width: 18px;
  height: 18px;
}
.window {
  margin-left: auto;
  display: flex;
  align-items: center;
  height: 32px;
  color: #5f6368;
}
.window button {
  width: 32px;
}
.window .search {
  width: 44px;
  color: #3c4043;
}
.window svg {
  width: 16px;
  height: 16px;
}

/* address bar */
.browser {
  height: 38px;
  flex: none;
  display: flex;
  align-items: center;
  padding: 0 6px;
  border-bottom: 1px solid #d5d7da;
  color: #5f6368;
}
.browser button {
  width: 32px;
  height: 28px;
}
.browser .off {
  color: #bdc1c6;
}
.browser .blue {
  color: #1976c5;
}
.browser svg {
  width: 19px;
  height: 19px;
}
.browser svg.ext {
  width: 16px;
  height: 16px;
}
.omnibox {
  flex: 1;
  height: 28px;
  display: flex;
  align-items: center;
  margin: 0 6px 0 7px;
  padding: 0 2px 0 11px;
  border-radius: 14px;
  background-color: #f1f3f4;
}
.omnibox .lock {
  width: 13px;
  height: 13px;
}
.omnibox input {
  flex: 1;
  height: 28px;
  border: none;
  padding: 0;
  margin-left: 9px;
  font: 14px Roboto, Arial, sans-serif;
  color: transparent;
  background: linear-gradient(to right, #202124 105px, #6b6f74 105px);
  -webkit-background-clip: text;
  background-clip: text;
}

/* title and menus */
.dochead {
  height: 65px;
  flex: none;
  display: flex;
  align-items: center;
  border-bottom: 1px solid #dadce0;
}
.logo {
  width: 66px;
  padding-left: 23px;
}
.logo svg {
  width: 26px;
  height: 36px;
}
.titles {
  flex: 1;
  padding-top: 3px;
  white-space: nowrap;
}
.titlerow {
  display: flex;
  align-items: center;
  height: 28px;
  padding-left: 6px;
  color: #5f6368;
}
.titlerow h1 {
  margin: 0 13px 0 0;
  font-size: 18px;
  font-weight: normal;
  color: #000;
}
.titlerow button {
  width: 30px;
}
.titlerow svg {
  width: 17px;
  height: 17px;
}
.menus {
  display: flex;
  align-items: center;
  height: 24px;
  padding-left: 5px;
  gap: 15px;
  font-size: 14px;
}
.menus a {
  margin-left: 8px;
  color: #777b80;
}
.actions {
  display: flex;
  align-items: center;
  padding-right: 20px;
  font-size: 15px;
  font-weight: 500;
}
.round {
  width: 51px;
  color: #5f6368;
}
.round svg {
  width: 24px;
  height: 24px;
}
.present {
  display: flex;
  height: 36px;
  margin: 0 8px 0 5px;
  border: 1px solid #dadce0;
  border-radius: 4px;
}
.present button {
  padding: 0 13px 0 12px;
  gap: 12px;
}
.present svg {
  width: 14px;
  height: 14px;
}
.present .drop {
  width: 20px;
  padding: 0;
  border-left: 1px solid #dadce0;
}
.present .drop svg {
  width: 8px;
  height: 4px;
}
.share {
  width: 88px;
  height: 36px;
  gap: 8px;
  border-radius: 4px;
  background-color: #fbbc04;
}
.share svg {
  width: 12px;
  height: 12px;
}
.avatar {
  width: 32px;
  height: 32px;
  margin-left: 20px;
  border-radius: 50%;
  background-color: #33691e;
  color: white;
  font-size: 16px;
}

/* editor */
.app {
  flex: 1;
  min-height: 0;
  display: flex;
}
.editor {
  flex: 1;
  min-width: 0;
  display: flex;
  flex-direction: column;
}
.toolbar {
  height: 39px;
  flex: none;
  display: flex;
  align-items: center;
  padding-left: 23px;
  border-bottom: 1px solid #dadce0;
  color: #5a5e63;
}
.new {
  display: flex;
  margin-right: 3px;
  background-color: #f1f3f4;
}
.tool {
  width: 28px;
  height: 26px;
}
.tool.wide {
  width: 30px;
}
.tool.on {
  background-color: #feefc3;
}
.tool svg {
  width: 18px;
  height: 18px;
}
.tool svg.s20 {
  width: 20px;
  height: 20px;
}
.tool svg.s16 {
  width: 16px;
  height: 16px;
}
.tool svg.s14 {
  width: 14px;
  height: 14px;
}
.tool.hide {
  margin: 0 4px 0 auto;
}
.tool.hide svg {
  width: 24px;
  height: 24px;
}
.caret {
  width: 18px;
  height: 26px;
}
.caret.tight {
  width: 12px;
  margin-left: -2px;
}
.new .caret {
  width: 16px;
}
.caret svg, .text svg {
  width: 8px;
  height: 4px;
}
.sep {
  width: 1px;
  height: 20px;
  margin: 0 4px;
  background-color: #dadce0;
}
.text {
  height: 26px;
  padding: 0 6px;
  gap: 1px;
  font-size: 12px;
  font-weight: 500;
  white-space: nowrap;
}
.work {
  flex: 1;
  min-height: 0;
  display: flex;
}

/* filmstrip */
.filmstrip {
  width: 220px;
  flex: none;
  display: flex;
  flex-direction: column;
  border-right: 1px solid #dadce0;
}
.filmstrip ol {
  flex: 1;
  margin: 0;
  padding: 4px 0 0;
  list-style: none;
}
.filmstrip li {
  width: 201px;
  height: 100px;
  display: flex;
  padding: 3px 4px 0 24px;
  font-size: 14px;
  color: #5f6368;
}
.filmstrip li.current {
  padding-top: 4px;
  background-color: #fef7e0;
  color: #202124;
  font-weight: 500;
}
.filmstrip span {
  width: 17px;
}
.thumb {
  width: 156px;
  height: 90px;
  border: 2px solid #dadce0;
  border-radius: 6px;
  background-color: white;
}
.current .thumb {
  border-color: #9aa0a6;
  height: 92px;
}
.qtext {
  font: 12px "DejaVu Sans Condensed", sans-serif;
  fill: #555;
}
.atext {
  font: 14px "Liberation Sans", sans-serif;
  fill: #000;
}
.views {
  height: 40px;
  display: flex;
  border-top: 1px solid #c4c7ca;
  color: #5f6368;
}
.views button {
  width: 48px;
  margin-left: 31px;
  padding: 0 4px 4px 0;
  border-top: 2px solid transparent;
}
.views button + button {
  margin-left: 61px;
}
.views .sel {
  border-color: #000;
  color: #202124;
}
.views svg {
  width: 14px;
  height: 12px;
}

/* rulers and canvas */
.stage {
  flex: 1;
  min-width: 0;
  display: flex;
  flex-direction: column;
}
.canvasrow {
  flex: 1;
  min-height: 0;
  display: flex;
}
.vruler {
  width: 14px;
  padding-top: 31px;
  border-right: 1px solid #dadce0;
  background: linear-gradient(#fff 13px, #e8eaed 13px);
}
.vruler svg {
  width: 13px;
  height: 409px;
}
.vruler text, .hruler text {
  font-size: 12px;
  text-anchor: middle;
  fill: #444;
}
.canvas {
  flex: 1;
  display: flex;
  flex-direction: column;
  align-items: center;
  background-color: #f8f9fa;
}
.hruler {
  align-self: stretch;
  height: 14px;
  flex: none;
  display: flex;
  justify-content: center;
  padding-left: 2px;
  border-bottom: 1px solid #dadce0;
  background-color: #e8eaed;
}
.hruler svg {
  width: 726px;
  height: 13px;
}
.slide {
  position: relative;
  width: 726px;
  height: 409px;
  margin: 17px 0 0 2px;
  border: 1px solid #c9cbce;
  box-shadow: 0 1px 3px rgba(0, 0, 0, .15);
  background-color: white;
}
.worksheet {
  position: absolute;
  left: 14px;
  top: 14px;
  width: 543px;
  display: grid;
  grid-template-columns: 1fr 1fr;
  border: 1px solid #444;
  border-width: 1px 1px 2px;
  font: 12px/14px "DejaVu Sans Condensed", sans-serif;
  color: #4a4a4a;
}
.cell {
  min-height: 115px;
  padding: 1px 3px 0 4px;
}
.cell:nth-child(odd) {
  border-right: 1px solid #666;
}
.cell:nth-child(n+3) {
  min-height: 194px;
  padding-top: 0;
  border-top: 1px solid #555;
}
.cell p {
  margin: 0;
}
.cell ol {
  margin: 3px 0 0 18px;
  padding: 0;
  list-style: none;
  counter-reset: choice;
}
.cell li {
  height: 38px;
  line-height: 38px;
  counter-increment: choice;
}
.cell li::before {
  content: counter(choice, upper-alpha) ")";
  display: inline-block;
  width: 18px;
}
.answer {
  position: absolute;
  font: 14px/16px "Liberation Sans", Arial, sans-serif;
  color: #000;
}
.a1 {
  left: 38px;
  top: 61px;
}
.a2 {
  left: 317px;
  top: 71px;
}
.a3 {
  left: 135px;
  top: 180px;
}
.a4 {
  left: 418px;
  top: 174px;
}
.selection {
  position: absolute;
  left: 12px;
  top: 12px;
  width: 552px;
  height: 316px;
  border: 1px solid #2467c0;
  box-shadow: 0 0 0 1px #a6cbf7;
}
.selection b {
  position: absolute;
  left: calc(50% - 4px);
  top: calc(50% - 4px);
  width: 8px;
  height: 8px;
  background-color: #1a6fdd;
  box-shadow: 0 0 0 1px white;
}
.selection b.n {
  top: -5px;
}
.selection b.s {
  top: calc(100% - 3px);
}
.selection b.w {
  left: -5px;
}
.selection b.e {
  left: calc(100% - 3px);
}
.rotate {
  position: absolute;
  left: calc(50% - 4px);
  top: -28px;
  width: 8px;
  height: 8px;
  border-radius: 50%;
  background-color: #1a6fdd;
}
.rotate::after {
  content: "";
  position: absolute;
  left: 3px;
  top: 8px;
  width: 1px;
  height: 15px;
  background-color: #2467c0;
}

/* speaker notes */
.splitter {
  height: 10px;
  flex: none;
  display: flex;
  align-items: center;
  justify-content: center;
  gap: 4px;
  border: 1px solid #e4e6e8;
  border-width: 1px 0;
}
.splitter i {
  width: 4px;
  height: 4px;
  border-radius: 50%;
  background-color: #c4c7ca;
}
.notes {
  height: 80px;
  flex: none;
  display: flex;
  align-items: flex-end;
}
.notes textarea {
  flex: 1;
  align-self: stretch;
  border: none;
  resize: none;
  padding: 9px 16px;
  font: 15px/20px "Liberation Sans", Arial, sans-serif;
}
.notes textarea::placeholder {
  color: #000;
}
.explore {
  width: 38px;
  height: 38px;
  margin: 0 16px 7px 0;
  border: 1px solid #d4d6d9;
  border-radius: 2px;
  color: #666a6e;
}
.explore svg {
  width: 18px;
  height: 20px;
}

/* side panel */
.side {
  width: 56px;
  flex: none;
  display: flex;
  flex-direction: column;
  align-items: center;
  padding-top: 18px;
  gap: 36px;
  border-left: 1px solid #dadce0;
  color: #5f6368;
}
.side svg {
  width: 20px;
  height: 20px;
}
.side text {
  font-size: 9px;
  font-weight: 500;
  text-anchor: middle;
  fill: #4285f4;
}
.side .expand {
  margin: auto 0 18px;
}

/* shelf */
.shelf {
  height: 48px;
  flex: none;
  display: grid;
  grid-template-columns: 1fr auto 1fr;
  align-items: center;
  padding: 0 6px;
  background-color: #2b161b;
  color: #f1eeee;
}
.launcher {
  width: 36px;
  height: 36px;
  border-radius: 50%;
  background-color: #402c31;
}
.launcher i {
  width: 15px;
  height: 15px;
  border: 2px solid white;
  border-radius: 50%;
}
.apps {
  display: flex;
  gap: 22px;
}
.apps button {
  height: 48px;
  flex-direction: column;
}
.apps button::after {
  content: "";
  width: 6px;
  height: 2px;
  margin: 3px 0 -5px;
  border-radius: 1px;
}
.apps .run::after {
  background-color: #8f8286;
}
.apps .open::after {
  width: 10px;
  background-color: white;
}
.apps svg {
  width: 34px;
  height: 34px;
}
.status {
  display: flex;
  justify-content: flex-end;
  gap: 9px;
}
.holding svg {
  width: 50px;
  height: 36px;
}
.tray {
  width: 151px;
  height: 36px;
  gap: 8px;
  border-radius: 18px;
  background-color: #3e2a2f;
  font-size: 14px;
}
.tray svg {
  width: 16px;
  height: 16px;
}
.tray svg.batt {
  width: 8px;
  height: 14px;
}
.tray text {
  font-size: 12px;
  font-weight: 700;
  text-anchor: middle;
  fill: #3e2a2f;
}
```
